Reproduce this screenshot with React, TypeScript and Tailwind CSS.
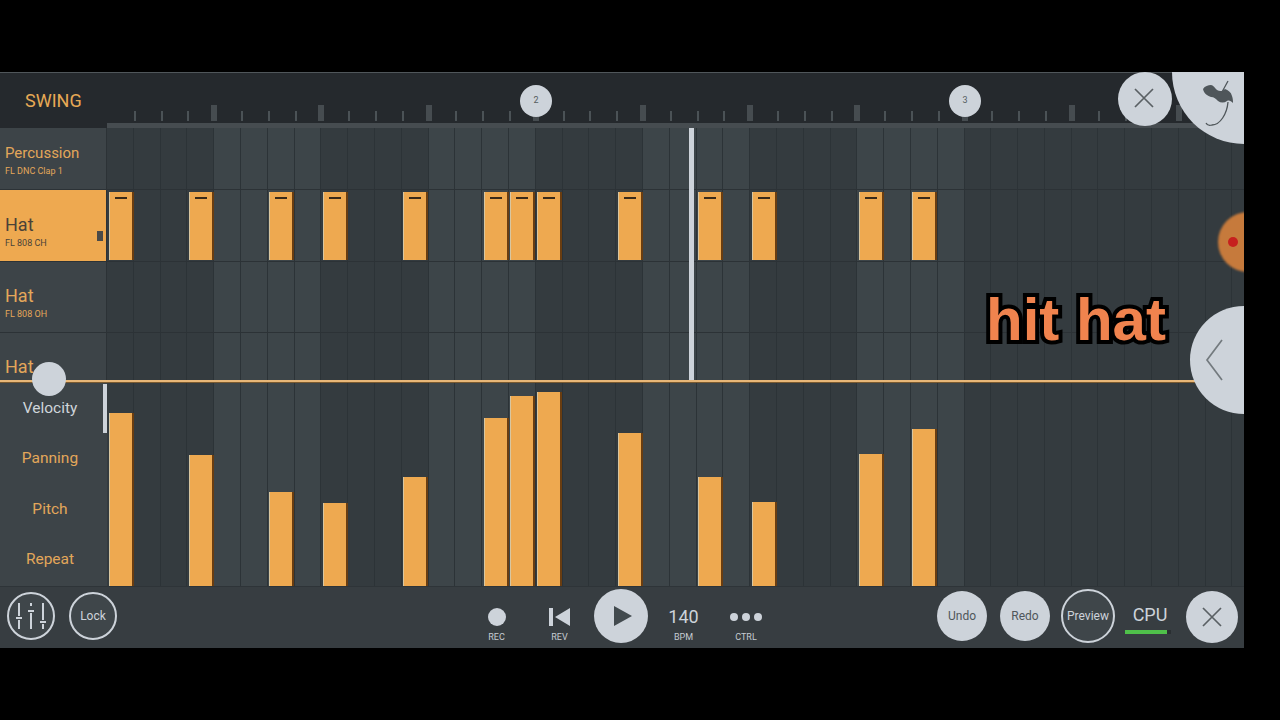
import React from "react";

const STEP = 26.8;
const COLS = 43;
const notes: [number, number][] = [
  [0, 413], [3, 455], [6, 492], [8, 503], [11, 477], [14, 418], [15, 396],
  [16, 392], [19, 433], [22, 477], [24, 502], [28, 454], [30, 429],
];
const colTemplate = { gridTemplateColumns: `repeat(${COLS}, ${STEP}px)` };

function Columns() {
  return (
    <div className="absolute inset-0 grid" style={colTemplate}>
      {Array.from({ length: COLS }).map((_, i) => {
        const g = Math.floor(i / 4);
        const light = g % 2 === 1 && i < 32;
        return (
          <div
            key={i}
            className={`border-r border-[#2c3337] ${light ? "bg-[#3d4549]" : "bg-[#343b3f]"}`}
          />
        );
      })}
    </div>
  );
}

function Ruler() {
  return (
    <div className="flex-1 h-full flex flex-col justify-end">
      <div className="flex items-end h-[16px] mb-[2px]">
        {Array.from({ length: 42 }).map((_, i) => {
          const big = i % 4 === 3;
          return (
            <div key={i} className="w-[26.8px] shrink-0 flex justify-end">
              {big ? (
                <div className="w-[6px] h-[16px] bg-[#464c50] translate-x-[3px]" />
              ) : (
                <div className="w-[2px] h-[10px] bg-[#4b5256] translate-x-[2px]" />
              )}
            </div>
          );
        })}
      </div>
      <div className="h-[5px] bg-[#464c50]" />
    </div>
  );
}

function Label({ name, sub, active, h }: { name: string; sub?: string; active?: boolean; h: string }) {
  const isPerc = name === "Percussion";
  return (
    <div
      className={`${h} relative pl-[5px] flex flex-col justify-center border-b border-[#2c3236] ${
        active ? "bg-[#eea950] text-[#4a4238]" : "text-[#e3a75a]"
      } ${isPerc ? "pt-[2px]" : "pt-[12px]"}`}
    >
      <div className={`leading-[20px] ${isPerc ? "text-[15px]" : "text-[18px]"}`}>{name}</div>
      {sub && <div className="text-[9px] leading-[12px] mt-[2px]">{sub}</div>}
      {active && <div className="absolute right-[3px] top-[41px] w-[6px] h-[10px] bg-[#4a4a48]" />}
    </div>
  );
}

function CloseIcon({ size = 22, color = "#5a6064" }: { size?: number; color?: string }) {
  return (
    <svg width={size} height={size} viewBox="0 0 22 22" fill="none" stroke={color} strokeWidth="1.7">
      <path d="M2 2 L20 20 M20 2 L2 20" />
    </svg>
  );
}

function RoundBtn({ label, cls = "" }: { label: string; cls?: string }) {
  return (
    <div className={`w-[50px] h-[50px] rounded-full bg-[#cdd3da] text-[#4f565a] text-[12px] flex items-center justify-center shrink-0 ${cls}`}>
      {label}
    </div>
  );
}

function Transport({ label, w, children }: { label: string; w: string; children: React.ReactNode }) {
  return (
    <div className={`${w} flex flex-col items-center shrink-0 pt-[14px]`}>
      <div className="h-[28px] flex items-center justify-center">{children}</div>
      <div className="text-[9px] leading-[12px] mt-[0px] text-[#c6ccd2]">{label}</div>
    </div>
  );
}

export default function App() {
  return (
    <div className="w-[1280px] h-[720px] bg-black pt-[72px] overflow-hidden [font-family:Roboto,'Liberation_Sans',sans-serif]">
      <div className="relative w-[1244px] h-[576px] bg-[#3a4145] overflow-hidden flex flex-col">
        {/* top ruler */}
        <div className="h-[56px] shrink-0 flex bg-[#25292d] border-t border-[#50565a]">
          <div className="w-[107px] shrink-0 pl-[25px] pt-[17px] text-[18px] leading-[22px] text-[#e8a955]">SWING</div>
          <Ruler />
        </div>

        {/* pattern area */}
        <div className="h-[252px] shrink-0 flex">
          <div className="w-[107px] shrink-0 bg-[#3d4448] border-r border-[#2c3236] overflow-hidden">
            <Label name="Percussion" sub="FL DNC Clap 1" h="h-[62px]" />
            <Label name="Hat" sub="FL 808 CH" active h="h-[72px]" />
            <Label name="Hat" sub="FL 808 OH" h="h-[71px]" />
            <div className="h-[47px] pl-[5px] pt-[24px] text-[18px] leading-[20px] text-[#e3a75a]">Hat</div>
          </div>
          <div className="relative flex-1 overflow-hidden">
            <Columns />
            <div className="relative h-[62px] border-b border-[#2c3236]" />
            <div className="relative h-[72px] border-b border-[#2c3236] grid" style={colTemplate}>
              {notes.map(([c]) => (
                <div
                  key={c}
                  className="mt-[2px] ml-[1.5px] w-[25px] h-[68px] bg-[#eea950] border-r-2 border-[#6a3d10] border-l border-l-[#d8c6a0] flex justify-center"
                  style={{ gridColumnStart: c + 1, gridRowStart: 1 }}
                >
                  <div className="mt-[5px] w-[12px] h-[2px] bg-[#3a2a18]" />
                </div>
              ))}
            </div>
            <div className="relative h-[71px] border-b border-[#2c3236]" />
            <div className="absolute left-[582px] top-0 bottom-0 w-[5px] bg-[#cdd3da]" />
          </div>
        </div>

        {/* divider */}
        <div className="h-[3px] shrink-0 bg-[#e8b778] border-b border-[#7a5a30]" />

        {/* automation */}
        <div className="h-[203px] shrink-0 flex">
          <div className="relative w-[107px] shrink-0 bg-[#3d4448] flex flex-col items-center pt-[13px] pr-[7px] text-[15.5px] text-[#e3a75a]">
            <div className="h-[50.4px] shrink-0 leading-[24px] text-[#cfd5da]">Velocity</div>
            <div className="h-[50.4px] shrink-0 leading-[24px]">Panning</div>
            <div className="h-[50.4px] shrink-0 leading-[24px]">Pitch</div>
            <div className="h-[50.4px] shrink-0 leading-[24px]">Repeat</div>
            <div className="absolute right-0 top-[1px] w-[4px] h-[49px] bg-[#cdd3da]" />
          </div>
          <div className="relative flex-1 overflow-hidden">
            <Columns />
            <div className="relative h-full grid items-end" style={colTemplate}>
              {notes.map(([c, top]) => (
                <div
                  key={c}
                  className="ml-[1.5px] w-[25px] bg-[#eea950] border-r-2 border-[#6a3d10] border-l border-l-[#d8c6a0]"
                  style={{ gridColumnStart: c + 1, gridRowStart: 1, height: 586 - top }}
                />
              ))}
            </div>
          </div>
        </div>

        {/* bottom bar */}
        <div className="h-[62px] shrink-0 bg-[#373d41] border-t border-[#2e3438] flex items-center pb-[3px]">
          <div className="ml-[7px] w-[48px] h-[48px] rounded-full border-2 border-[#cdd3da] bg-[#3f464a] flex items-center justify-center shrink-0">
            <svg width="30" height="28" viewBox="0 0 30 28" stroke="#cdd3da" strokeWidth="2" fill="none">
              <path d="M3 1V14 M3 18V27 M15 1V4 M15 11V27 M27 1V18 M27 22V27" />
              <path d="M0 16H6 M12 9H18 M24 20H30" strokeWidth="2.2" />
            </svg>
          </div>
          <div className="ml-[14px] w-[48px] h-[48px] rounded-full border-2 border-[#cdd3da] bg-[#3f464a] text-[#cdd3da] text-[12px] flex items-center justify-center shrink-0">
            Lock
          </div>

          <div className="ml-[348px] flex items-center">
            <Transport label="REC" w="w-[63px]">
              <div className="w-[18px] h-[18px] rounded-full bg-[#cdd3da]" />
            </Transport>
            <Transport label="REV" w="w-[63px]">
              <svg width="21" height="18" viewBox="0 0 21 18" fill="#cdd3da">
                <path d="M0 0H4V18H0Z M21 0V18L6 9Z" />
              </svg>
            </Transport>
            <div className="ml-[3px] w-[54px] h-[54px] rounded-full bg-[#cdd3da] flex items-center justify-center shrink-0">
              <svg width="18" height="20" viewBox="0 0 18 20" fill="#424a4e" className="ml-[3px]">
                <path d="M0 0L18 10L0 20Z" />
              </svg>
            </div>
            <Transport label="BPM" w="w-[71px]">
              <div className="text-[18px] leading-[26px] text-[#cdd3da]">140</div>
            </Transport>
            <Transport label="CTRL" w="w-[54px]">
              <div className="flex gap-[4px]">
                <div className="w-[8px] h-[8px] rounded-full bg-[#cdd3da]" />
                <div className="w-[8px] h-[8px] rounded-full bg-[#cdd3da]" />
                <div className="w-[8px] h-[8px] rounded-full bg-[#cdd3da]" />
              </div>
            </Transport>
          </div>

          <div className="ml-[164px] flex items-center">
            <RoundBtn label="Undo" />
            <RoundBtn label="Redo" cls="ml-[13px]" />
            <div className="ml-[11px] w-[54px] h-[54px] rounded-full border-2 border-[#cdd3da] bg-[#3f464a] text-[#cdd3da] text-[12px] flex items-center justify-center shrink-0">
              Preview
            </div>
            <div className="ml-[10px] w-[50px] flex flex-col shrink-0 pt-[6px]">
              <div className="text-[18px] leading-[22px] text-[#cdd3da] text-center">CPU</div>
              <div className="mt-[4px] h-[4px] w-[46px] bg-[#2a2f32]">
                <div className="h-full w-[42px] bg-[#4fc04a]" />
              </div>
            </div>
            <div className="ml-[11px] mt-[1px] w-[52px] h-[52px] rounded-full bg-[#cdd3da] flex items-center justify-center shrink-0">
              <CloseIcon />
            </div>
          </div>
        </div>

        {/* overlays */}
        <div className="absolute left-[520px] top-[13px] w-[32px] h-[32px] rounded-full bg-[#cdd3da] text-[#555c60] text-[9px] flex items-center justify-center">2</div>
        <div className="absolute left-[949px] top-[13px] w-[32px] h-[32px] rounded-full bg-[#cdd3da] text-[#555c60] text-[9px] flex items-center justify-center">3</div>
        <div className="absolute left-[1118px] top-0 w-[54px] h-[54px] rounded-full bg-[#cdd3da] flex items-center justify-center">
          <div className="-translate-x-[1px] -translate-y-[1px]">
            <CloseIcon />
          </div>
        </div>
        <div className="absolute left-[1172px] top-[-72px] w-[144px] h-[144px] rounded-full bg-[#cdd3da]" />
        <svg className="absolute left-[1198px] top-[8px]" width="40" height="50" viewBox="0 0 40 50">
          <path d="M5 9C7 6 10 5 13 5C15 5 17 8 19 10C22 12 25 11 27 9C30 10 33 12 34 16C35 19 35 21 35 23C33 21 31 20 29 21C26 23 23 23 20 21C18 19 16 17 13 17C10 16 6 14 5 9Z" fill="#4f565a" />
          <path d="M30 1L24 12 M30 22C29 34 22 45 14 45C11 46 9 45 8 43" fill="none" stroke="#4f565a" strokeWidth="1.3" />
        </svg>
        <div className="absolute left-[1218px] top-[140px] w-[60px] h-[60px] rounded-full bg-[#c67a3c] blur-[1px]" />
        <div className="absolute left-[1228px] top-[165px] w-[10px] h-[10px] rounded-full bg-[#c6201e] blur-[0.5px]" />
        <div className="absolute left-[1190px] top-[234px] w-[108px] h-[108px] rounded-full bg-[#cdd3da]" />
        <svg className="absolute left-[1205px] top-[267px]" width="18" height="42" viewBox="0 0 18 42" fill="none" stroke="#737a7e" strokeWidth="1.7">
          <path d="M17 1L2 21L17 41" />
        </svg>
        <div className="absolute left-[32px] top-[290px] w-[34px] h-[34px] rounded-full bg-[#cdd3da]" />
        <div className="absolute left-[986px] top-[212px] text-[60px] leading-[72px] font-bold text-[#f0834e] [font-family:'Liberation_Sans',sans-serif] [paint-order:stroke_fill] [-webkit-text-stroke:8px_#000]">
          hit hat
        </div>
      </div>
    </div>
  );
}
